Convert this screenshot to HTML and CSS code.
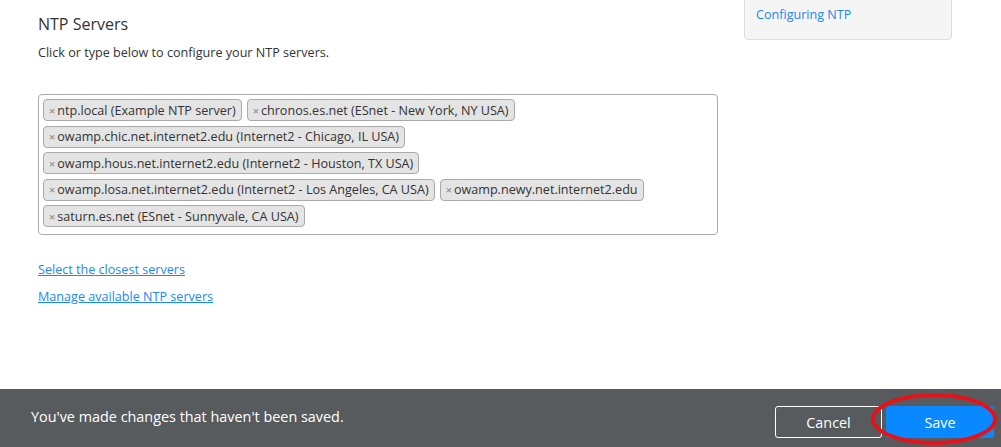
FILE: index.html
```html
<!DOCTYPE html>
<html>
<head>
<meta charset="utf-8">
<link rel="stylesheet" href="styles.css">
</head>
<body>
<div class="page">
  <div class="main">
    <section class="content">
      <h2 class="title">NTP Servers</h2>
      <p class="subtitle">Click or type below to configure your NTP servers.</p>
      <div class="tagbox">
        <span class="tag"><span class="x">×</span>ntp.local (Example NTP server)</span>
        <span class="tag"><span class="x">×</span>chronos.es.net (ESnet - New York, NY USA)</span>
        <span class="tag"><span class="x">×</span>owamp.chic.net.internet2.edu (Internet2 - Chicago, IL USA)</span>
        <span class="tag"><span class="x">×</span>owamp.hous.net.internet2.edu (Internet2 - Houston, TX USA)</span>
        <span class="tag"><span class="x">×</span>owamp.losa.net.internet2.edu (Internet2 - Los Angeles, CA USA)</span>
        <span class="tag"><span class="x">×</span>owamp.newy.net.internet2.edu</span>
        <span class="tag"><span class="x">×</span>saturn.es.net (ESnet - Sunnyvale, CA USA)</span>
      </div>
      <div class="links">
        <a href="#" class="link">Select the closest servers</a>
        <a href="#" class="link">Manage available NTP servers</a>
      </div>
    </section>
    <aside class="sidebar">
      <div class="helpbox">
        <a href="#" class="helplink">Configuring NTP</a>
      </div>
    </aside>
  </div>
  <footer class="footer">
    <span class="msg">You've made changes that haven't been saved.</span>
    <div class="actions">
      <button class="btn cancel">Cancel</button>
      <button class="btn save">Save</button>
      <svg class="mark" width="130" height="56" viewBox="0 0 130 56"><ellipse cx="63" cy="27" rx="61" ry="24" fill="none" stroke="#e3131b" stroke-width="4"/></svg>
    </div>
  </footer>
</div>
</body>
</html>
```
FILE: styles.css
```css
* { box-sizing: border-box; }
html, body { margin: 0; padding: 0; }
body {
  font-family: "Open Sans", "Liberation Sans", sans-serif;
  color: #333;
  background: #fff;
}
.page {
  height: 447px;
  display: flex;
  flex-direction: column;
  overflow: hidden;
}
.main {
  flex: 1;
  display: flex;
  gap: 26px;
  padding-left: 38px;
}
.content {
  width: 680px;
}
.title {
  margin: 0;
  padding-top: 12px;
  font-size: 16px;
  font-weight: 400;
  line-height: 24px;
  color: #333;
}
.subtitle {
  margin: 8px 0 0;
  font-size: 12.6px;
  line-height: 18px;
}
.tagbox {
  margin-top: 32px;
  border: 1px solid #aaa;
  border-radius: 4px;
  padding: 4px 4px 7px;
  height: 141px;
  display: flex;
  flex-wrap: wrap;
  align-content: flex-start;
  column-gap: 5px;
  row-gap: 4.5px;
}
.tag {
  display: inline-flex;
  align-items: center;
  height: 22px;
  padding: 0 5px 0 5px;
  background: #e4e4e4;
  border: 1px solid #aaa;
  border-radius: 4px;
  font-size: 12.6px;
  color: #333;
  white-space: nowrap;
}
.x {
  color: #999;
  font-size: 11px;
  font-weight: 700;
  margin-right: 2px;
}
.links {
  margin-top: 26px;
  display: flex;
  flex-direction: column;
  gap: 9px;
}
.link {
  font-size: 12.6px;
  line-height: 18px;
  color: #1a88f8;
  text-decoration: underline;
  align-self: flex-start;
}
.sidebar {
  width: 208px;
}
.helpbox {
  margin-top: -20px;
  height: 60px;
  background: #f5f5f5;
  border: 1px solid #ddd;
  border-radius: 4px;
  padding: 21px 11px 0;
}
.helplink {
  font-size: 12.6px;
  line-height: 18px;
  color: #1a88f8;
  text-decoration: none;
}
.footer {
  height: 58px;
  background: #575b5e;
  display: flex;
  align-items: center;
  justify-content: space-between;
  padding: 0 7px 0 31px;
}
.msg {
  color: #fff;
  font-size: 14.4px;
  margin-top: -3px;
}
.actions {
  position: relative;
  display: flex;
  gap: 4px;
  align-items: center;
  margin-top: 8px;
}
.btn {
  font-family: "Open Sans", "Liberation Sans", sans-serif;
  font-size: 14.4px;
  color: #fff;
  height: 32px;
  border-radius: 3px;
}
.cancel {
  width: 107px;
  background: transparent;
  border: 1px solid #fff;
}
.save {
  width: 108px;
  background: #0a88ff;
  border: 1px solid #0a88ff;
}
.mark {
  position: absolute;
  left: 96px;
  top: -14px;
  pointer-events: none;
}
```
